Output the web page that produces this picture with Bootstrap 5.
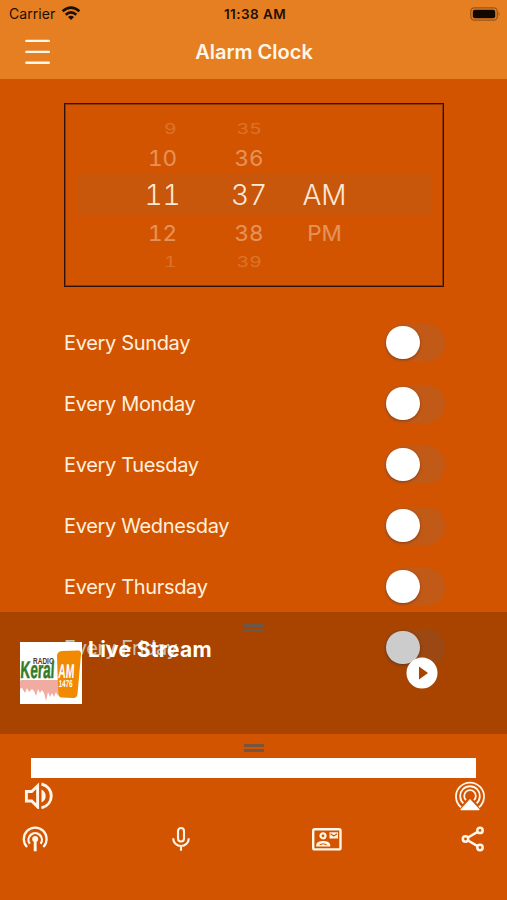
<!DOCTYPE html>
<html lang="en">
<head>
<meta charset="utf-8">
<meta name="viewport" content="width=device-width, initial-scale=1">
<title>Alarm Clock</title>
<link href="https://cdn.jsdelivr.net/npm/bootstrap@5.3.0/dist/css/bootstrap.min.css" rel="stylesheet">
<style>
body{background:#d35400;font-family:Inter,"Liberation Sans",sans-serif;height:900px;overflow:hidden}
svg{display:block;flex:none}
.app-head{background:#e67e22;height:79px}
.status{height:27px;font-size:13.5px;line-height:27px;color:#1c0f04;padding:0 6px 0 9px}
.status>*{flex:1 1 0}
.carrier{font-size:14px;letter-spacing:.05px;margin-right:2px}
.status-time{font-weight:600;letter-spacing:.45px;padding-top:1px}
.title-bar{height:52px;padding:0 24px}
.title-text{font-size:20px;font-weight:600;color:#fff8ea;letter-spacing:0;line-height:50px;margin-top:-2px;padding-left:1px}
.side{width:28px}
.alarm{padding:24px 63px 0 64px}
.wheel{height:184px;border:1px solid #30100a;box-shadow:inset 0 0 0 1px #8f3800;padding:13px 12px 0 12px}
.wheel-col{color:#ffe9d6;white-space:nowrap;font-feature-settings:"tnum"}
.wheel-col div{display:flex;justify-content:center;align-items:center}
.c-hour{width:171px}
.c-min{width:2px}
.c-half{width:149px}
.r1,.r5{height:23px;font-size:19px}
.r2,.r4{height:35px;font-size:22.5px}
.r3{height:41px;font-size:28px}
.wheel-rows{background:linear-gradient(#c8560b,#c8560b) 0 57px/100% 42px no-repeat}
.r1 span,.r5 span{opacity:.2;transform:scale(1.02,.74)}
.r1 span{transform:translateY(1px) scale(1.02,.74)}
.r2 span,.r4 span{opacity:.42;transform:translateY(-1px) scaleY(.96)}
.r2 span{transform:scaleY(.96)}
.r3 span{font-weight:300;transform:translateY(-1px)}
.days{padding-top:25px}
.day{height:61px;font-size:20px;color:#fff0df;letter-spacing:-.34px}
.toggle{width:61px;height:38px;border-radius:19px;background:#c25a17;padding:2px;margin-right:-1px}
.knob{width:33.5px;height:33.5px;border-radius:50%;background:#fff;box-shadow:0 1px 3px rgba(70,20,0,.45)}
.dock{left:0;right:0;bottom:0}
.mini{height:122px;background:rgba(0,0,0,.2)}
.grip{width:20px;height:8px;border-top:3px solid #75553e;border-bottom:3px solid #75553e}
.mini .grip{border-color:#6b5848}
.mini-body{padding:6px 69px 0 20px}
.stream{font-size:21px;font-weight:700;color:#fff;line-height:26px;margin:-1px 0 0 6px;letter-spacing:.28px}
.play{margin-top:19px}
.panel{height:166px;background:#d35400;padding-top:10px}
.volume{height:20px;background:#fff;margin:6px 31px 0}
.tools-a{padding:3px 21px 0 24px;height:36px}
.tools-b{padding:11px 20px 0 21px}
</style>
</head>
<body class="position-relative">
<header class="app-head">
  <div class="status d-flex align-items-center">
    <div class="d-flex align-items-center gap-1"><span class="carrier">Carrier</span>
      <svg width="20" height="15" viewBox="0 0 20 15" fill="none" stroke="#1c0f04" stroke-width="2.6"><path d="M1.6 5.3Q10-2.2 18.4 5.3M4.7 8.7Q10 4 15.3 8.7"/><path d="M7 11.1Q10 8.6 13 11.1L10 14Z" fill="#1c0f04" stroke="none"/></svg></div>
    <div class="status-time text-center">11:38 AM</div>
    <div class="d-flex justify-content-end"><svg width="31" height="14" viewBox="0 0 31 14"><rect x=".8" y=".8" width="26.5" height="12.4" rx="3.6" fill="none" stroke="#97571c" stroke-width="1.3"/><rect x="2.8" y="2.7" width="22.4" height="8.6" rx="2" fill="#120800"/><path d="M28.6 5q2 2 0 4Z" fill="#97571c"/></svg></div>
  </div>
  <div class="title-bar d-flex align-items-center justify-content-between">
    <svg class="side" width="28" height="28" viewBox="0 0 28 28" stroke="#fff8ea" stroke-width="2.4" stroke-linecap="round"><path d="M2.4 1.9h22.4M2.4 12.9h22.4M2.4 23.7h22.4"/></svg>
    <div class="title-text">Alarm Clock</div>
    <div class="side"></div>
  </div>
</header>

<main class="alarm">
  <div class="wheel">
    <div class="wheel-rows d-flex">
      <div class="wheel-col c-hour"><div class="r1"><span class="ms-3">9</span></div><div class="r2"><span>10</span></div><div class="r3"><span>11</span></div><div class="r4"><span>12</span></div><div class="r5"><span class="ms-3">1</span></div></div>
      <div class="wheel-col c-min"><div class="r1"><span>35</span></div><div class="r2"><span>36</span></div><div class="r3"><span>37</span></div><div class="r4"><span>38</span></div><div class="r5"><span>39</span></div></div>
      <div class="wheel-col c-half"><div class="r1"></div><div class="r2"></div><div class="r3"><span>AM</span></div><div class="r4"><span>PM</span></div></div>
    </div>
  </div>
  <div class="days">
    <div class="day d-flex align-items-center justify-content-between"><span>Every Sunday</span><div class="toggle"><div class="knob"></div></div></div>
    <div class="day d-flex align-items-center justify-content-between"><span>Every Monday</span><div class="toggle"><div class="knob"></div></div></div>
    <div class="day d-flex align-items-center justify-content-between"><span>Every Tuesday</span><div class="toggle"><div class="knob"></div></div></div>
    <div class="day d-flex align-items-center justify-content-between"><span>Every Wednesday</span><div class="toggle"><div class="knob"></div></div></div>
    <div class="day d-flex align-items-center justify-content-between"><span>Every Thursday</span><div class="toggle"><div class="knob"></div></div></div>
    <div class="day d-flex align-items-center justify-content-between"><span>Every Friday</span><div class="toggle"><div class="knob"></div></div></div>
  </div>
</main>

<footer class="dock position-absolute">
  <section class="mini pt-2">
    <div class="pt-1"><div class="grip mx-auto"></div></div>
    <div class="mini-body d-flex align-items-start">
      <svg class="mt-1" width="62" height="62" viewBox="0 0 62 62" font-family="Liberation Sans, Arial, sans-serif" font-weight="700">
        <rect width="62" height="62" fill="#fff"/>
        <path d="M1 38h37v16l-2-4-2 5-2-4-2 4-2-5-2 9-2-8-2-3-2 3-2-4-2 7-2-5-2-2-3 3-2-4-2 5-3-5-3 1-2 5-2-6Z" fill="#f0aca0"/>
        <path d="M42 9l16-.4q3.4 0 3 4L57.5 52q-.6 4-4 4l-12-.4q-3-.3-3.3-4L37 14q0-4.600 5-5Z" fill="#f18a00"/>
        <text x="13" y="21.500" font-size="9" textLength="21" lengthAdjust="spacingAndGlyphs" fill="#51351e">RADIO</text>
        <text x="2" y="36.500" font-size="24" textLength="34" lengthAdjust="spacingAndGlyphs" fill="#347b28" stroke="#347b28" stroke-width=".5" transform="skewX(-3)">Keral</text>
        <text x="40" y="36.500" font-size="20" textLength="16" lengthAdjust="spacingAndGlyphs" fill="#fff" transform="skewX(-3)">AM</text>
        <text x="40" y="45.500" font-size="10" textLength="14" lengthAdjust="spacingAndGlyphs" fill="#fff" transform="skewX(-2)">1476</text>
      </svg>
      <div class="stream flex-grow-1">Live Stream</div>
      <svg class="play" width="32" height="32" viewBox="0 0 32 32"><circle cx="16" cy="16" r="15.5" fill="#fff"/><path d="M13 9.500v13l9-6.500Z" fill="#a94300"/></svg>
    </div>
  </section>
  <section class="panel">
    <div class="grip mx-auto"></div>
    <div class="volume"></div>
    <div class="tools-a d-flex justify-content-between">
      <svg width="29" height="28" viewBox="0 0 29 28" fill="none" stroke="#fff5e8" stroke-width="2.900"><path d="M2.400 10.500h5.300l5.900-5.700v21l-5.900-5.800H2.400Z"/><path d="M17.500 8.500q4.200 2 4.200 6.500t-4.200 6.500Z" fill="#fff5e8" stroke="none"/><path d="M17.500 3C30.500 6.300 30.500 23.500 17.500 26.800"/></svg>
      <svg width="31" height="31" viewBox="0 0 31 31" fill="none" stroke="#fff5e8" stroke-width="1.800"><path d="M6 26.300A14 14 0 1 1 24 26.300M8.400 22.300A9.800 9.800 0 1 1 21.600 22.300M11 19.200A5.800 5.800 0 1 1 19 19.200"/><path d="M15 18l9.500 10.300q.5 1-.8 1H6.300q-1.300 0-.8-1Z" fill="#fff" stroke="none"/></svg>
    </div>
    <div class="tools-b d-flex justify-content-between align-items-center">
      <svg width="29" height="28" viewBox="0 0 29 28" fill="none" stroke="#fff5e8" stroke-width="2.300"><path d="M6.100 22A11.400 11.400 0 1 1 22.300 22M8.800 18.800A6.700 6.700 0 1 1 19.600 18.800"/><circle cx="14.200" cy="14" r="3" fill="#fff5e8" stroke="none"/><path d="M14.200 14v12.300" stroke-width="2.900"/></svg>
      <svg width="24" height="28" viewBox="-4 1 24 28" fill="none" stroke="#fff5e8" stroke-width="2.100"><rect x="7" y="4" width="6" height="13.500" rx="3"/><path d="M2.200 14.200A7.800 7.800 0 0 0 17.800 14.200M10 21.500v5.300"/></svg>
      <svg class="ms-1" width="31" height="28" viewBox="-1 0 31 28" fill="none" stroke="#fff5e8" stroke-width="2.400"><rect x="1.200" y="4.200" width="27.300" height="20.200" rx="1.500"/><circle cx="11" cy="10.800" r="2.500" stroke-width="2.200"/><path d="M4.200 21.600v-1.400c0-3 3.500-4.300 7-4.300s7 1.300 7 4.300v1.400Z" fill="#fff5e8" stroke="none"/><path d="M7.700 19.700q3.500-1.800 7 0" stroke="#d35400" stroke-width="1"/><path d="M17.500 7.300h8.500v6.200H17.500Z" fill="#fff5e8" stroke="none"/><path d="M18.500 8.700l3.300 2.300 3.300-2.300" stroke="#d35400" stroke-width="1.100"/></svg>
      <svg width="28" height="28" viewBox="0 0 28 28" fill="none" stroke="#fff5e8" stroke-width="2.500"><circle cx="6.500" cy="14" r="2.700"/><circle cx="21" cy="5.400" r="2.700"/><circle cx="21" cy="22.500" r="2.700"/><path d="M9 12.500l9.600-5.600M9 15.500l9.600 5.600"/></svg>
    </div>
  </section>
</footer>
<script src="https://cdn.jsdelivr.net/npm/bootstrap@5.3.0/dist/js/bootstrap.bundle.min.js"></script>
</body>
</html>
